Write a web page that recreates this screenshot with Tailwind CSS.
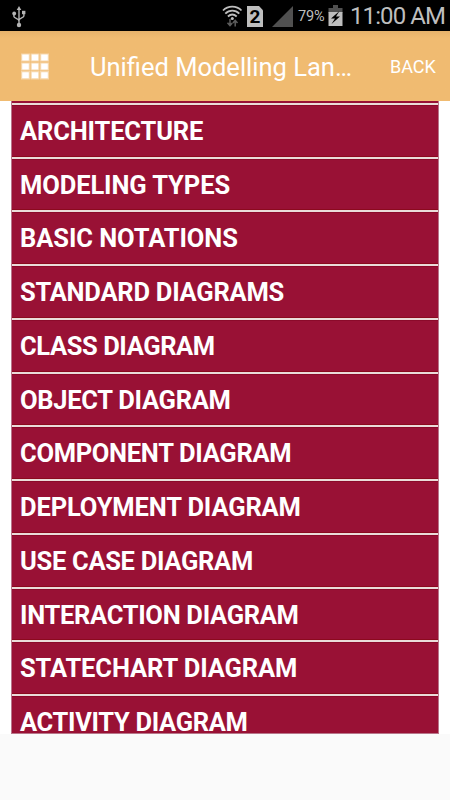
<!DOCTYPE html>
<html lang="en">
<head>
    <meta charset="UTF-8">
    <meta name="viewport" content="width=device-width, initial-scale=1.0">
    <title>Unified Modelling Language</title>
    <script src="https://cdn.jsdelivr.net/npm/@tailwindcss/browser@4"></script>
</head>
<body class="bg-[#fafafa] font-['Roboto',sans-serif]">

    <div class="h-[800px] w-[450px] flex flex-col overflow-hidden">
        <!-- Status bar -->
        <div class="h-[31px] shrink-0 bg-black flex items-center text-[#bebebe]">
            <svg class="ml-3 w-[14px] h-[22px] shrink-0 mt-[2px]" viewBox="0 0 14 22" fill="none" stroke="#b5b5b5" stroke-width="1.4">
                <path d="M7 3v15M1.9 8v2.5c0 2 5.1 2 5.1 4.500M11.9 7v3c0 2-4.900 2-4.900 4.500" />
                <path d="M7 0l2.300 4H4.700z" fill="#b5b5b5" stroke="none" />
                <circle cx="2.200" cy="7.500" r="1.900" fill="#b5b5b5" stroke="none" />
                <path d="M10 4.800h3.400v3.400H10z" fill="#b5b5b5" stroke="none" />
                <circle cx="7" cy="19" r="2.200" fill="#b5b5b5" stroke="none" />
            </svg>
            <svg class="ml-[195px] w-[23px] h-[23px] shrink-0 mt-px" viewBox="0 0 23 23" fill="none" stroke="#bebebe" stroke-width="1.800">
                <path d="M2 5.500C7 .3 15.500 .3 20.500 5.500M4.300 8.600c4-4 10-4 14 0M6.900 11.500c2.700-2.500 6.100-2.500 8.800 0" />
                <circle cx="11.300" cy="13.500" r="1.500" fill="#bebebe" stroke="none" />
                <path d="M9 14v6M6.500 17.700L9 20.500l2.300-2.600M14.200 21.500v-6M11.900 18l2.300-2.600 2.300 2.600" stroke="#5c5c5c" stroke-width="1.500" />
            </svg>
            <div class="ml-[3px] w-4 h-[21px] shrink-0 bg-[#bebebe] [clip-path:polygon(0_0,75%_0,100%_20%,100%_100%,0_100%)] mt-[2px] text-black font-bold text-[19px] leading-[22px] text-center">2</div>
            <svg class="ml-[9px] w-[21px] h-[21px] shrink-0 mt-[2px]" viewBox="0 0 21 21">
                <path d="M21 0v21H0z" fill="#505050" />
            </svg>
            <span class="ml-[5px] w-[28px] shrink-0 text-[14.500px] tracking-[-0.200px] mt-[3px]">79%</span>
            <svg class="ml-[2px] w-[15px] h-[22px] shrink-0 mt-px" viewBox="0 0 15 22">
                <path d="M5 0h5v3h4.500v5H.5V3H5z" fill="#505050" />
                <path d="M.5 7h14v14H.5z" fill="#bebebe" />
                <path d="M11.500 6L3 13.500h4L3.500 19 12 11.500H8z" fill="#000" />
            </svg>
            <span class="ml-[7px] text-[24px] leading-[31px] tracking-[-0.900px] whitespace-nowrap mt-px">11:00 AM</span>
        </div>

        <!-- Toolbar -->
        <div class="h-[70px] shrink-0 bg-[#f0bb71] bg-linear-to-b from-[#e6b26b] to-[#f0bb71] to-10% flex items-center text-white">
            <svg class="ml-[20px] w-[30px] h-[28px] shrink-0 mt-[2px]" viewBox="0 0 30 28">
                <g fill="#fff" fill-opacity=".4">
                    <path d="M1 .5h9v8H1zM10.500.5h9v8h-9zM20 .5h9v8h-9zM1 9.500h9v8H1zM10.500 9.500h9v8h-9zM20 9.500h9v8h-9zM1 18h9v8.500H1zM10.500 18h9v8.500h-9zM20 18h9v8.500h-9z" />
                </g>
                <g fill="#fff">
                    <path d="M2.200 1.500h6.600v6H2.200zM11.700 1.500h6.600v6h-6.600zM21.200 1.500h6.600v6h-6.600zM2.200 10.500h6.600v6H2.200zM11.700 10.500h6.600v6h-6.600zM21.200 10.500h6.600v6h-6.600zM2.200 19.200h6.600v6H2.200zM11.700 19.200h6.600v6h-6.600zM21.200 19.200h6.600v6h-6.600z" />
                </g>
            </svg>
            <h1 class="ml-[40px] w-[270px] shrink-0 font-normal text-[25.500px] whitespace-nowrap mt-[2px]">Unified Modelling Lan…</h1>
            <span class="ml-[30px] text-[18px] mt-px">BACK</span>
        </div>

        <!-- Topic list -->
        <div class="h-[633px] shrink-0 bg-white pl-[11px] pr-[11px]">
            <ul id="topics" class="h-full flex flex-col overflow-hidden bg-[#991135] border-x border-b border-[#b8768a]">
                <li class="h-[3.900px] shrink-0 border-b-2 border-[#eadcd9]"></li>
            </ul>
        </div>
    </div>

    <script>
        // label and its letter spacing in px
        const topics = [
            ['ARCHITECTURE', -0.15],
            ['MODELING TYPES', -0.1],
            ['BASIC NOTATIONS', -0.07],
            ['STANDARD DIAGRAMS', -0.24],
            ['CLASS DIAGRAM', -0.4],
            ['OBJECT DIAGRAM', -0.28],
            ['COMPONENT DIAGRAM', -0.3],
            ['DEPLOYMENT DIAGRAM', -0.14],
            ['USE CASE DIAGRAM', -0.3],
            ['INTERACTION DIAGRAM', -0.3],
            ['STATECHART DIAGRAM', -0.12],
            ['ACTIVITY DIAGRAM', -0.32],
        ];

        const list = document.getElementById('topics');

        topics.forEach(([topic, spacing]) => {
            const li = document.createElement('li');
            li.className = 'h-[53.750px] shrink-0 border-b-2 border-[#eadcd9] shadow-[inset_0_-1px_0_#8b0a1e,inset_0_1px_0_#8b0a2a] pl-[8px] text-[25.500px] leading-[52px] font-bold text-white whitespace-nowrap';
            li.style.letterSpacing = `${spacing}px`;
            li.textContent = topic;
            list.appendChild(li);
        });
    </script>
</body>
</html>
